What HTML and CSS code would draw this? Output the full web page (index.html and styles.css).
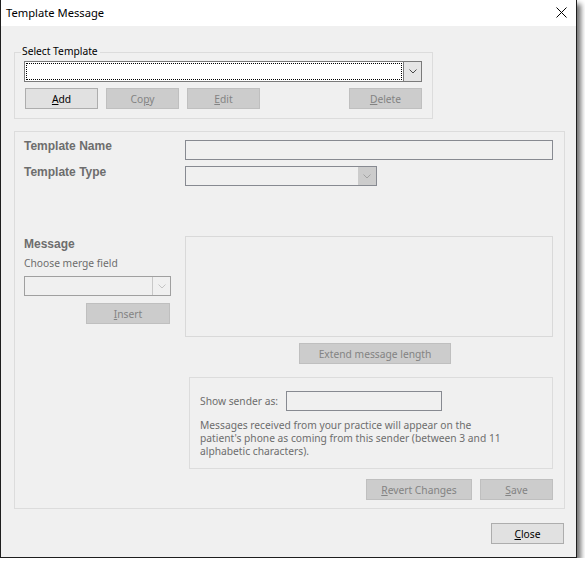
FILE: index.html
```html
<!DOCTYPE html>
<html>
<head>
<meta charset="utf-8">
<link rel="stylesheet" href="styles.css">
</head>
<body>
<div class="window">
  <div class="titlebar">
    <span class="title">Template Message</span>
    <svg class="close-x" width="11" height="11" viewBox="0 0 11 11"><path d="M0.5 0.5 L10.5 10.5 M10.5 0.5 L0.5 10.5" stroke="#000" stroke-width="1" fill="none"/></svg>
  </div>
  <div class="content">
    <div class="group group-select">
      <span class="legend">Select Template</span>
      <div class="combo combo-main">
        <div class="combo-field"><div class="focus"></div></div>
        <div class="combo-btn btn-main">
          <svg width="8" height="5" viewBox="0 0 8 5"><path d="M0.5 0.5 L4 4 L7.5 0.5" stroke="#4a4a4a" stroke-width="1" fill="none"/></svg>
        </div>
      </div>
      <div class="btn-row">
        <div class="btn enabled"><u>A</u>dd</div>
        <div class="btn disabled">Co<u>p</u>y</div>
        <div class="btn disabled"><u>E</u>dit</div>
        <div class="btn disabled push-right"><u>D</u>elete</div>
      </div>
    </div>

    <div class="group group-detail">
      <div class="row">
        <div class="label bold">Template Name</div>
        <div class="textbox name-box"></div>
      </div>
      <div class="row row-type">
        <div class="label bold">Template Type</div>
        <div class="combo combo-type">
          <div class="combo-field"></div>
          <div class="combo-btn btn-type">
            <svg width="8" height="5" viewBox="0 0 8 5"><path d="M0.5 0.5 L4 4 L7.5 0.5" stroke="#a3a3a3" stroke-width="1" fill="none"/></svg>
          </div>
        </div>
      </div>
      <div class="row row-message">
        <div class="left-col">
          <div class="label bold msg-label">Message</div>
          <div class="label normal merge-label">Choose merge field</div>
          <div class="combo combo-merge">
            <div class="combo-field"></div>
            <div class="combo-btn btn-merge">
              <svg width="8" height="5" viewBox="0 0 8 5"><path d="M0.5 0.5 L4 4 L7.5 0.5" stroke="#c4c4c4" stroke-width="1" fill="none"/></svg>
            </div>
          </div>
          <div class="btn disabled insert-btn"><u>I</u>nsert</div>
        </div>
        <div class="message-area"></div>
      </div>
      <div class="btn disabled extend-btn">Extend message length</div>
      <div class="sender-box">
        <div class="sender-row">
          <span class="sender-label">Show sender as:</span>
          <div class="textbox sender-input"></div>
        </div>
        <p class="sender-note">Messages received from your practice will appear on the<br>patient's phone as coming from this sender (between 3 and 11<br>alphabetic characters).</p>
      </div>
      <div class="action-row">
        <div class="btn disabled revert-btn"><u>R</u>evert Changes</div>
        <div class="btn disabled save-btn"><u>S</u>ave</div>
      </div>
    </div>

    <div class="footer">
      <div class="btn enabled close-btn"><u>C</u>lose</div>
    </div>
  </div>
</div>
</body>
</html>
```

FILE: styles.css
```css
html, body {
  margin: 0;
  padding: 0;
  background: #ffffff;
}

body {
  font-family: "Noto Sans", "Liberation Sans", sans-serif;
  font-size: 10.25px;
  color: #000;
}

.window {
  width: 577px;
  height: 558px;
  box-sizing: border-box;
  border: 1px solid #1e1e1e;
  border-top: none;
  background: #f0f0f0;
  box-shadow: 4px 4px 5px rgba(0, 0, 0, 0.55);
  display: flex;
  flex-direction: column;
}

.titlebar {
  height: 26px;
  background: #ffffff;
  display: flex;
  align-items: center;
  justify-content: space-between;
  padding: 0 9px 0 5px;
  flex-shrink: 0;
}

.title {
  font-size: 11.2px;
  line-height: 16px;
  color: #000;
  margin-top: -1px;
}

.close-x {
  display: block;
  margin-top: -2px;
}

.content {
  flex: 1;
  display: flex;
  flex-direction: column;
  padding: 0 0 0 13px;
}

.group {
  position: relative;
  box-sizing: border-box;
  border: 1px solid #dcdcdc;
}

.group-select {
  margin-top: 26px;
  width: 419px;
  height: 67px;
  padding: 8px 0 0 9px;
}

.legend {
  position: absolute;
  top: -9px;
  left: 6px;
  padding: 0 2px 0 1px;
  background: #f0f0f0;
  line-height: 15px;
  color: #000;
}

.combo {
  display: flex;
  box-sizing: border-box;
  border: 1px solid #7a7a7a;
}

.combo-field {
  flex: 1;
  display: flex;
}

.combo-main {
  width: 398px;
  height: 21px;
}

.combo-main .combo-field {
  background: #fff;
  padding: 1px;
}

.focus {
  flex: 1;
  border: 1px dotted #000;
}

.combo-btn {
  width: 17px;
  display: flex;
  align-items: center;
  justify-content: center;
  border-left: 1px solid #7a7a7a;
}

.combo-btn svg {
  display: block;
}

.btn-main {
  background: #e5e5e5;
}

.btn-row {
  display: flex;
  gap: 8px;
  width: 398px;
  box-sizing: border-box;
  padding-left: 1px;
  margin-top: 6px;
}

.btn {
  box-sizing: border-box;
  height: 21px;
  width: 73px;
  padding-top: 1px;
  line-height: 18px;
  text-align: center;
  white-space: nowrap;
}

.btn.enabled {
  background: #e1e1e1;
  border: 1px solid #adadad;
  color: #000;
}

.btn.disabled {
  background: #cccccc;
  border: 1px solid #bfbfbf;
  color: #838383;
}

.push-right {
  margin-left: auto;
}

.group-detail {
  margin-top: 12px;
  width: 551px;
  height: 378px;
  padding: 8px 10px 0 9px;
  display: flex;
  flex-direction: column;
}

.row {
  display: flex;
  align-items: flex-start;
}

.label {
  color: #6d6d6d;
  line-height: 14px;
}

.label.bold {
  font-family: "Liberation Sans", "Noto Sans", sans-serif;
  font-weight: bold;
  font-size: 12px;
}

.row > .label {
  width: 161px;
  margin-top: -1px;
  flex-shrink: 0;
}

.textbox {
  box-sizing: border-box;
  border: 1px solid #878a91;
  background: #f0f0f0;
  height: 20px;
}

.name-box {
  width: 368px;
}

.row-type {
  margin-top: 6px;
}

.combo-type {
  width: 192px;
  height: 20px;
  border-color: #878a91;
}

.btn-type {
  background: #cccccc;
  border-left: none;
  width: 18px;
}

.row-message {
  margin-top: 50px;
}

.left-col {
  width: 161px;
  flex-shrink: 0;
  display: flex;
  flex-direction: column;
}

.msg-label {
  margin-top: 1px;
}

.merge-label {
  margin-top: 5px;
}

.combo-merge {
  margin-top: 6px;
  width: 147px;
  height: 20px;
  border-color: #a0a0a0;
}

.btn-merge {
  background: #f0f0f0;
  border-left: 1px solid #c8c8c8;
}

.insert-btn {
  margin-top: 7px;
  margin-left: 62px;
  width: 84px;
}

.message-area {
  width: 368px;
  height: 101px;
  box-sizing: border-box;
  border: 1px solid #d9d9d9;
  background: #f0f0f0;
}

.extend-btn {
  margin-top: 6px;
  margin-left: 275px;
  width: 152px;
}

.sender-box {
  margin-top: 13px;
  margin-left: 165px;
  width: 364px;
  height: 92px;
  box-sizing: border-box;
  border: 1px solid #dcdcdc;
  padding: 13px 0 0 10px;
  color: #6d6d6d;
}

.sender-row {
  display: flex;
  align-items: center;
}

.sender-label {
  width: 86px;
  line-height: 14px;
}

.sender-input {
  width: 156px;
}

.sender-note {
  margin: 8px 0 0 0;
  line-height: 13px;
  white-space: nowrap;
}

.action-row {
  margin-top: 10px;
  display: flex;
  justify-content: flex-end;
  gap: 8px;
  padding-right: 1px;
}

.revert-btn {
  width: 106px;
}

.save-btn {
  width: 73px;
}

.footer {
  margin-top: 14px;
  display: flex;
  justify-content: flex-end;
  padding-right: 12px;
}

.close-btn {
  width: 73px;
}
```
